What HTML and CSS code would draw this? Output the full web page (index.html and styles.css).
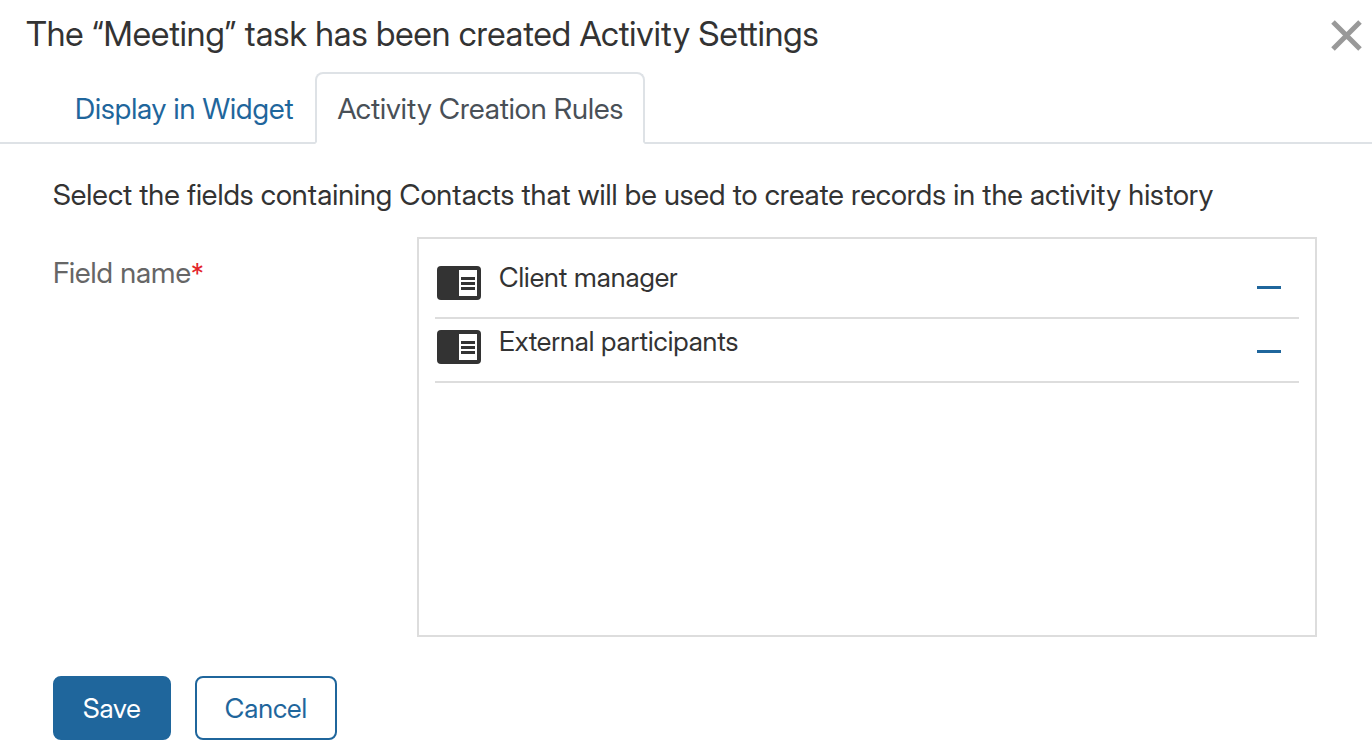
FILE: index.html
```html
<!DOCTYPE html>
<html lang="en">
<head>
    <meta charset="UTF-8">
    <meta name="viewport" content="width=device-width, initial-scale=1.0">
    <title>Activity Settings</title>
    <link rel="stylesheet" href="styles.css">
</head>
<body>
    <header class="modal-header">
        <h1 class="modal-title">The “Meeting” task has been created Activity Settings</h1>
        <button type="button" class="close-button" aria-label="Close">
            <svg width="32" height="32" viewBox="0 0 32 32" aria-hidden="true">
                <path d="M3 2L30 29M30 2L3 29" fill="none" stroke="#999999" stroke-width="5"/>
            </svg>
        </button>
    </header>

    <nav class="tabs">
        <a href="#widget" class="tab">Display in Widget</a>
        <a href="#rules" class="tab tab-active" aria-current="page">Activity Creation Rules</a>
    </nav>

    <form class="settings-form">
        <p class="hint">Select the fields containing Contacts that will be used to create records in the activity history</p>

        <div class="form-row">
            <div class="form-label" id="fieldLabel">Field name<span class="required">*</span></div>
            <ul class="field-list" aria-labelledby="fieldLabel">
                <li class="field-item">
                    <svg class="field-icon" width="44" height="34" viewBox="0 0 44 34" aria-hidden="true">
                        <rect width="44" height="34" rx="4" fill="#333333"/>
                        <path d="M22 4H40V30H22Z" fill="#ffffff"/>
                        <path d="M24 12.5H38M24 17.5H38M24 22.5H38" stroke="#333333" stroke-width="3"/>
                    </svg>
                    <span class="field-name">Client manager</span>
                    <button type="button" class="remove-button" aria-label="Remove Client manager"></button>
                </li>
                <li class="field-item">
                    <svg class="field-icon" width="44" height="34" viewBox="0 0 44 34" aria-hidden="true">
                        <rect width="44" height="34" rx="4" fill="#333333"/>
                        <path d="M22 4H40V30H22Z" fill="#ffffff"/>
                        <path d="M24 12.5H38M24 17.5H38M24 22.5H38" stroke="#333333" stroke-width="3"/>
                    </svg>
                    <span class="field-name">External participants</span>
                    <button type="button" class="remove-button" aria-label="Remove External participants"></button>
                </li>
            </ul>
        </div>

        <div class="form-actions">
            <button type="submit" class="button button-primary">Save</button>
            <button type="button" class="button">Cancel</button>
        </div>
    </form>
</body>
</html>
```
FILE: styles.css
```css
* {
    margin: 0;
    padding: 0;
    box-sizing: border-box;
}

body {
    background-color: #ffffff;
    color: #333333;
    font-family: 'Inter Display', Inter, 'Liberation Sans', sans-serif;
    font-variation-settings: 'opsz' 32;
    font-size: 29px;
    line-height: 36px;
}

.modal-header {
    display: flex;
    align-items: center;
    justify-content: space-between;
    height: 72px;
    padding: 0 10px 0 26px;
}

.modal-title {
    padding-bottom: 4px;
    font-size: 34px;
    font-weight: 400;
    line-height: 44px;
}

.close-button {
    display: flex;
    background: none;
    border: none;
    cursor: pointer;
}

.tabs {
    display: flex;
    padding-left: 53px;
    border-bottom: 2px solid #dee2e6;
}

.tab {
    height: 72px;
    margin-bottom: -2px;
    padding: 17px 20px;
    border: 2px solid transparent;
    color: #1f669c;
    text-decoration: none;
}

.tab-active {
    border-color: #dee2e6 #dee2e6 #ffffff;
    border-radius: 8px 8px 0 0;
    background-color: #ffffff;
    color: #495057;
}

.settings-form {
    padding: 33px 55px 6px 53px;
}

.hint {
    margin-bottom: 24px;
}

.form-row {
    display: grid;
    grid-template-columns: 364px 1fr;
}

.form-label {
    padding-top: 18px;
    color: #666666;
}

.required {
    color: #e3242b;
    font-size: 27px;
}

.field-list {
    min-height: 400px;
    padding: 16px;
    border: 2px solid #dddddd;
    list-style: none;
}

.field-item {
    display: flex;
    align-items: flex-start;
    gap: 18px;
    height: 64px;
    padding: 11px 18px 0 2px;
    border-bottom: 2px solid #dddddd;
    font-size: 27px;
}

.field-name {
    flex: 1;
    line-height: 24px;
}

.remove-button {
    width: 24px;
    height: 3px;
    margin-top: 20px;
    background-color: #1f669c;
    border: none;
    cursor: pointer;
}

.form-actions {
    display: flex;
    gap: 24px;
    margin-top: 39px;
}

.button {
    height: 64px;
    padding: 0 28px;
    border: 2px solid #1f669c;
    border-radius: 8px;
    background-color: #ffffff;
    color: #1f669c;
    font-family: inherit;
    font-size: 27px;
    cursor: pointer;
}

.button-primary {
    background-color: #1f669c;
    color: #ffffff;
}
```
